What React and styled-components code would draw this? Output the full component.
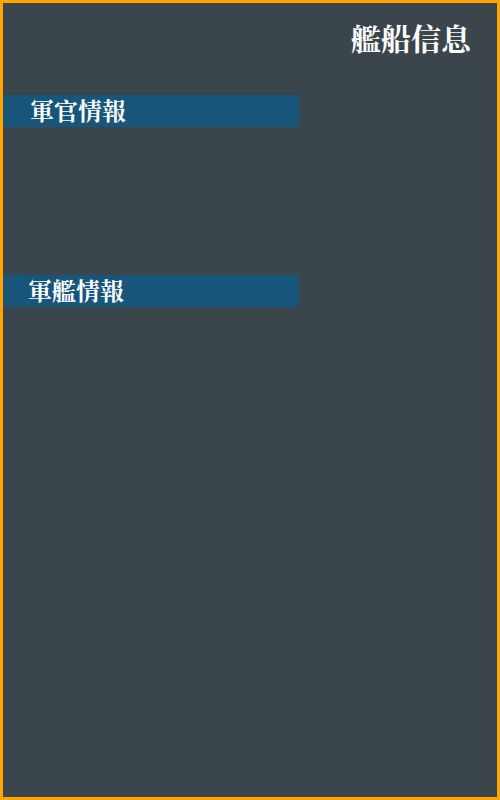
import React from 'react';
import styled, { createGlobalStyle } from 'styled-components';

const GlobalStyle = createGlobalStyle`
  html, body {
    margin: 0;
    padding: 0;
  }
  * {
    box-sizing: border-box;
  }
`;

const Frame = styled.div`
  width: 500px;
  height: 800px;
  border: 3px solid #ffa500;
  background: #3b464c;
  font-family: "Noto Serif CJK TC", "Noto Serif CJK SC", serif;
  color: #ffffff;
  display: flex;
  flex-direction: column;
`;

const Header = styled.header`
  display: flex;
  justify-content: flex-end;
  padding: 14px 26px 0 0;
  height: 92px;
`;

const Title = styled.h1`
  margin: 0;
  font-size: 30px;
  font-weight: bold;
  line-height: 40px;
`;

const Section = styled.section`
  height: 180px;
`;

const SectionBar = styled.h2`
  margin: 0;
  width: 296px;
  height: 32px;
  background: #17557a;
  padding-left: ${p => p.$indent}px;
  font-size: 24px;
  font-weight: bold;
  line-height: 30px;
`;

const sections = [
  { title: '軍官情報', indent: 27 },
  { title: '軍艦情報', indent: 25 },
];

const App = () => (
  <>
    <GlobalStyle />
    <Frame>
      <Header>
        <Title>艦船信息</Title>
      </Header>
      {sections.map(s => (
        <Section key={s.title}>
          <SectionBar $indent={s.indent}>{s.title}</SectionBar>
        </Section>
      ))}
    </Frame>
  </>
);

export default App;
